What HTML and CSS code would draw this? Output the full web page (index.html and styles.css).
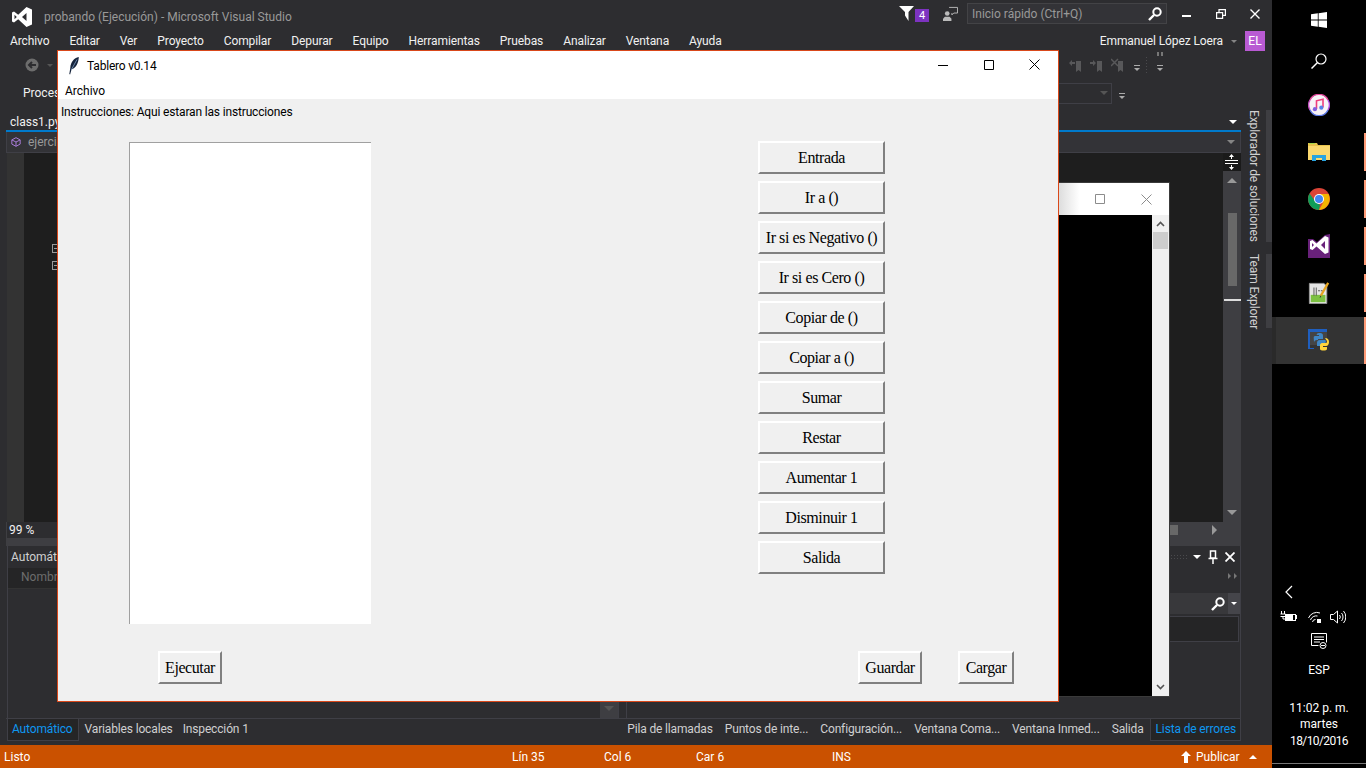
FILE: index.html
```html
<!DOCTYPE html>
<html lang="es">
<head>
<meta charset="utf-8">
<title>Tablero v0.14</title>
<link rel="stylesheet" href="styles.css">
</head>
<body>
<div class="desktop">
  <div class="vs">
    <header class="vs-title">
      <svg class="vs-logo" viewBox="0 0 20 20"><path fill="#fff" fill-rule="evenodd" d="M14.5 0 20 2.500v15L14.500 20 6.200 12.200 2 15.600 0 14.600V5.400l2-1 4.200 3.400zM14.500 6 10 10l4.500 4zM2.500 7.800v4.400L4.800 10z"/></svg>
      <span class="vs-name">probando (Ejecución) - Microsoft Visual Studio</span>
      <span class="spring"></span>
      <svg class="filter" viewBox="0 0 15 15"><path fill="#fff" d="M0 0h15L9.500 6v9L6 9.500V6z"/></svg>
      <span class="badge">4</span>
      <svg class="feedback" viewBox="0 0 16 16"><path fill="none" stroke="#bbb" d="M6.500 1.500h9v6h-4l-2 2v-2"/><circle cx="4.500" cy="8" r="2.500" fill="#bbb"/><path fill="#bbb" d="M0 16v-2.500l2-2h5l2 2V16z"/></svg>
      <div class="quick">
        <span>Inicio rápido (Ctrl+Q)</span>
        <svg class="keyicon" viewBox="0 0 14 14"><circle cx="9" cy="5" r="3.700" fill="none" stroke="#fff" stroke-width="2"/><path stroke="#fff" stroke-width="2.400" d="M6 8 1 13"/></svg>
      </div>
      <svg class="cap cap-min" viewBox="0 0 10 10"><path fill="#fff" d="M0 6h9v2H0z"/></svg>
      <svg class="cap cap-res" viewBox="0 0 10 10"><path fill="none" stroke="#fff" stroke-width="1.200" d="M.6 3.600h6v5.800h-6zM3 3.500V.6h6.400v5.800H7"/></svg>
      <svg class="cap cap-cls" viewBox="0 0 10 10"><path stroke="#fff" stroke-width="1.400" d="m.5.500 9 9m0-9-9 9"/></svg>
    </header>
    <nav class="vs-menu">
      <span>Archivo</span><span>Editar</span><span>Ver</span><span>Proyecto</span><span>Compilar</span><span>Depurar</span><span>Equipo</span><span>Herramientas</span><span>Pruebas</span><span>Analizar</span><span>Ventana</span><span>Ayuda</span>
      <span class="spring"></span>
      <span class="user">Emmanuel López Loera</span>
      <i class="caret caret-dim"></i>
      <span class="avatar">EL</span>
    </nav>
    <div class="toolbar tb1">
      <i class="grip"></i>
      <svg class="backbtn" viewBox="0 0 14 14"><circle cx="7" cy="7" r="6.500" fill="#6d6d6d"/><path stroke="#2d2d30" stroke-width="2" fill="none" d="M11 7H4m3-3L4 7l3 3"/></svg>
      <i class="caret caret-small"></i>
      <span class="spring"></span>
      <svg class="bm" viewBox="0 0 14 14"><path fill="#58585a" d="M7 3h5v11l-2.500-2L7 14zM0 5l3-3v2h3v2H3v2z"/></svg>
      <svg class="bm" viewBox="0 0 14 14"><path fill="#58585a" d="M7 3h5v11l-2.500-2L7 14zM6 5 3 2v2H0v2h3v2z"/></svg>
      <svg class="bm" viewBox="0 0 14 14"><path fill="#58585a" d="M7 3h5v11l-2.500-2L7 14z"/><path stroke="#58585a" stroke-width="1.500" d="m0 1 7 7m0-7-7 7"/></svg>
      <i class="more more1"></i>
      <i class="dotgrip"></i>
      <i class="more more3"></i>
    </div>
    <div class="toolbar tb2">
      <i class="grip grip-short"></i>
      <span class="proc">Proces</span>
      <span class="spring"></span>
      <span class="combo"><i class="caret caret-dark"></i></span>
      <i class="more more2"></i>
    </div>
    <div class="workspace">
      <div class="docs">
        <div class="tabstrip">
          <span class="doctab">class1.py</span>
          <i class="caret caret-white"></i>
        </div>
        <div class="navbar">
          <svg class="cube" viewBox="0 0 12 12"><path fill="none" stroke="#a77bd6" stroke-width="1.200" d="M6 .8 11 3.500v5L6 11.200 1 8.500v-5zM1 3.500 6 6l5-2.500M6 6v5"/></svg>
          <span>ejercicio</span>
          <span class="spring"></span>
          <i class="caret caret-dim"></i>
        </div>
        <div class="editor">
          <div class="gutter"></div>
          <div class="code">
            <i class="fold"></i>
            <i class="fold"></i>
          </div>
          <div class="vscroll">
            <svg class="split" viewBox="0 0 18 18"><path stroke="#fff" fill="none" d="M2 7.500h13M2 10.500h13"/><path fill="#fff" d="M8.500 1 6 4h2v2h1V4h2zM8.500 17 6 14h2v-2h1v2h2z"/></svg>
            <i class="arrow-up"></i>
            <i class="thumb"></i>
            <i class="marker"></i>
            <span class="spring"></span>
            <i class="arrow-down"></i>
          </div>
        </div>
        <div class="zoomrow">
          <span class="zoomval">99 %</span>
          <span class="spring"></span>
          <i class="hthumb"></i>
          <i class="arrow-right"></i>
        </div>
        <div class="panels">
          <section class="panel panel-left">
            <div class="panelhead">Automático</div>
            <div class="gridhead">Nombre</div>
            <div class="panelbody">
              <span class="spring"></span>
              <div class="panelscroll"><i class="arrow-down"></i></div>
            </div>
          </section>
          <section class="panel panel-right">
            <div class="panelhead right-head">
              <i class="dotgrip dotgrip-h"></i>
              <i class="caret caret-white"></i>
              <svg class="pin" viewBox="0 0 10 14"><path fill="none" stroke="#fff" stroke-width="1.500" d="M2.500 1h5v7h-5zM.5 8.500h9M5 9v5"/></svg>
              <svg class="panelx" viewBox="0 0 10 10"><path stroke="#fff" stroke-width="1.800" d="m.5.500 9 9m0-9-9 9"/></svg>
            </div>
            <div class="overflow"><i></i><i></i></div>
            <div class="searchrow">
              <svg class="keyicon" viewBox="0 0 14 14"><circle cx="9" cy="5" r="3.700" fill="none" stroke="#fff" stroke-width="2"/><path stroke="#fff" stroke-width="2.400" d="M6 8 1 13"/></svg>
              <span class="searchdrop"><i class="caret caret-white"></i></span>
            </div>
            <div class="listbox"></div>
            <div class="rightfill"></div>
          </section>
        </div>
        <div class="bottomtabs">
          <div class="tabgroup tabgroup-left">
            <span class="btab active">Automático</span>
            <span class="btab">Variables locales</span>
            <span class="btab">Inspección 1</span>
          </div>
          <div class="tabgroup tabgroup-right">
            <span class="btab">Pila de llamadas</span>
            <span class="btab">Puntos de inte...</span>
            <span class="btab">Configuración...</span>
            <span class="btab">Ventana Coma...</span>
            <span class="btab">Ventana Inmed...</span>
            <span class="btab">Salida</span>
            <span class="btab active">Lista de errores</span>
          </div>
        </div>
      </div>
      <aside class="sidetabs">
        <div class="sidetab st1"><span>Explorador de soluciones</span><i></i></div>
        <div class="sidetab st2"><span>Team Explorer</span><i></i></div>
      </aside>
    </div>
    <footer class="status">
      <span class="st-listo">Listo</span>
      <span class="st-lin">Lín 35</span>
      <span class="st-col">Col 6</span>
      <span class="st-car">Car 6</span>
      <span class="st-ins">INS</span>
      <svg class="st-up" viewBox="0 0 10 12"><path fill="#fff" d="M5 0 10 5H7v7H3V5H0z"/></svg>
      <span class="st-pub">Publicar</span>
      <i class="caret-up"></i>
    </footer>
  </div>

  <aside class="taskbar">
    <div class="slot slot-top">
      <svg class="win" viewBox="0 0 16 16"><path fill="#fff" d="M0 2.300 6.800 1.300v6.300H0zM7.600 1.200 16 0v7.600H7.600zM0 8.400h6.800v6.300L0 13.700zM7.600 8.400H16V16l-8.400-1.200z"/></svg>
    </div>
    <div class="slot slot-top">
      <svg class="find" viewBox="0 0 16 16"><circle cx="10" cy="6" r="5" fill="none" stroke="#fff" stroke-width="1.200"/><path stroke="#fff" stroke-width="1.500" d="M6.500 9.500 .5 15.500"/></svg>
    </div>
    <div class="slot">
      <svg class="app" viewBox="0 0 22 22"><circle cx="11" cy="11" r="10.500" fill="#f7f3f8"/><path fill="none" stroke="#e0469a" stroke-width="1.400" d="M2 6A10 10 0 0 1 20 6"/><path fill="none" stroke="#5b78e6" stroke-width="1.400" d="M20 16A10 10 0 0 1 2 16"/><path fill="none" stroke="#c44fc0" stroke-width="1.400" d="M2 6a10 10 0 0 0 0 10"/><path fill="none" stroke="#b04fe0" stroke-width="1.400" d="M20 6a10 10 0 0 1 0 10"/><path fill="none" stroke="#ee3d7d" stroke-width="1.600" d="M8.500 15V6.800l6.500-1.500v8.200"/><circle cx="6.900" cy="15.200" r="2.100" fill="#7f5fe0"/><circle cx="13.300" cy="13.700" r="2.100" fill="#5a7fe8"/></svg>
    </div>
    <div class="slot run">
      <svg class="app" viewBox="0 0 22 20"><path fill="#e8c44d" d="M0 1h9l1 2h12v3H0z"/><path fill="#a6d84a" d="M1 1h6v1H1z"/><path fill="#fbd96f" d="M0 4h22v14H0z"/><path fill="#2aa5e0" d="M4 19v-6h14v6h-4v-3H8v3z"/></svg>
    </div>
    <div class="slot run">
      <svg class="app" viewBox="0 0 22 22"><circle cx="11" cy="11" r="11" fill="#db4437"/><path fill="#0f9d58" d="M11 22A11 11 0 0 1 1.500 5.500L7 13l5 4z"/><path fill="#f4b400" d="M11 6h9.500A11 11 0 0 1 11 22l4.500-8z"/><circle cx="11" cy="11" r="5" fill="#fff"/><circle cx="11" cy="11" r="4" fill="#4285f4"/></svg>
    </div>
    <div class="slot run">
      <svg class="app app-tall" viewBox="0 0 22 24"><path fill="#68217a" d="M0 5h5l4 3 8-7 5-1v24H0z"/><path fill="#fff" fill-rule="evenodd" d="M17 2l3.500 1.500v15L17 20l-8.500-7.500L4.500 16 2 15V7l2.500-1 4 3.500zM17 7l-4 4 4 4zM4 9v4l2-2z"/></svg>
    </div>
    <div class="slot run">
      <svg class="app" viewBox="0 0 22 24"><path fill="#e6e6e6" stroke="#999" d="M.5 1.500h16l3 3v19H.5z"/><path fill="#7cc142" d="M2 14h16v8H2z"/><path fill="#555" d="M5 6h1v9H5zM7.500 6h1v9h-1zM10 9h2v1h-2zM13 9h2v1h-2z"/><path stroke="#e6a520" stroke-width="2.500" d="M21 1 13 15"/><path stroke="#333" stroke-width="1" d="m13 15-.8 2"/></svg>
    </div>
    <div class="slot run active">
      <svg class="app" viewBox="0 0 22 22"><path fill="#1f5fbf" d="M0 0h19v3H2v16h4v1H0z"/><path fill="#444" d="M2 3h17v13H2z"/><path fill="#3f86c4" d="M11 4c4 0 4 1.500 4 3v3h-5v1h7c2 0 0 6-2 6H9v-3c0-2 1-3 3-3h-3c-2 0-3 1-3 3v-1c0-3-1-6 1-6h4V6H9c-1 0 0-2 2-2z"/><path fill="#ffd43b" d="M17 9c3 0 4 2 4 4s-1 4-3 4h-3v1h4v2c0 2-7 2-7 0v-4c0-1 1-2 2-2h4c1 0 1-1 1-2z"/></svg>
    </div>
    <span class="spring"></span>
    <div class="tray">
      <svg class="chev" viewBox="0 0 8 14"><path fill="none" stroke="#fff" stroke-width="1.200" d="M7 1 1 7l6 6"/></svg>
      <div class="tray-icons">
        <svg class="t-batt" viewBox="0 0 17 12"><path fill="none" stroke="#fff" d="M1.500 0v3M4.500 0v3M.5 3h5v2.500h-5M3 6v2h2"/><path fill="#fff" d="M5 3h11v1h1v4h-1v2H5zM6 4v5h9V4z"/><path fill="#fff" d="M6 4h7v5H6z"/></svg>
        <svg class="t-wifi" viewBox="0 0 13 12"><path fill="none" stroke="#fff" d="M.5 7A9 9 0 0 1 12 2M2.500 9A6 6 0 0 1 9.500 5M4.500 11a3 3 0 0 1 3-2.500"/><path fill="#fff" d="M9 8h4v4H9z"/></svg>
        <svg class="t-vol" viewBox="0 0 16 14"><path fill="none" stroke="#fff" d="M.5 4.500h3l4-3.500v12l-4-3.500h-3zM9.500 5a3 3 0 0 1 0 4M11.500 3a6 6 0 0 1 0 8M13.500 1a9 9 0 0 1 0 12"/></svg>
      </div>
      <svg class="t-note" viewBox="0 0 16 16"><path fill="none" stroke="#fff" d="M.5.500h15v9M.5.500v12h7"/><path stroke="#fff" d="M3 4h10M3 6.500h10M3 9h6"/><circle cx="12" cy="12.500" r="3" fill="#000" stroke="#fff"/><path stroke="#fff" d="M10 12.500h4"/></svg>
      <div class="lang">ESP</div>
      <div class="clock">11:02 p. m.<br>martes<br><span class="date">18/10/2016</span></div>
    </div>
    <div class="bottomline"></div>
  </aside>

  <div class="console">
    <div class="con-title">
      <span class="con-fade"></span>
      <svg class="con-max" viewBox="0 0 10 10"><path fill="none" stroke="#8c8c8c" d="M.5.500h9v9h-9z"/></svg>
      <svg class="con-cls" viewBox="0 0 11 11"><path stroke="#8c8c8c" d="m.5.500 10 10m0-10-10 10"/></svg>
    </div>
    <div class="con-body">
      <div class="con-screen"></div>
      <div class="con-scroll">
        <svg class="con-arrow" viewBox="0 0 9 6"><path fill="none" stroke="#555" stroke-width="1.600" d="m1 5 3.500-3.500L8 5"/></svg>
        <i class="con-thumb"></i>
        <span class="spring"></span>
        <svg class="con-arrow" viewBox="0 0 9 6"><path fill="none" stroke="#555" stroke-width="1.600" d="M1 1l3.500 3.500L8 1"/></svg>
      </div>
    </div>
  </div>

  <div class="tk">
    <div class="tk-title">
      <svg class="feather" viewBox="0 0 10 18"><path fill="#16243c" d="M9.800 0C5 1 1.500 5 1.300 11L.3 17l.8.500 1.400-5C7 11 9.500 6 9.800 0z"/><path stroke="#8fb0d8" stroke-width=".7" d="M8 2.500 2.200 13"/></svg>
      <span class="tk-name">Tablero v0.14</span>
      <span class="spring"></span>
      <svg class="tk-cap tk-min" viewBox="0 0 10 10"><path stroke="#000" d="M0 5.500h10"/></svg>
      <svg class="tk-cap tk-max" viewBox="0 0 10 10"><path fill="none" stroke="#000" d="M.5.500h9v9h-9z"/></svg>
      <svg class="tk-cap tk-cls" viewBox="0 0 11 11"><path stroke="#000" d="m.5.500 10 10m0-10-10 10"/></svg>
    </div>
    <div class="tk-menu"><span>Archivo</span></div>
    <div class="tk-body">
      <div class="tk-label">Instrucciones: Aqui estaran las instrucciones</div>
      <div class="tk-main">
        <div class="tk-text"></div>
        <div class="tk-buttons">
          <button class="tkbtn wide">Entrada</button>
          <button class="tkbtn wide">Ir a ()</button>
          <button class="tkbtn wide">Ir si es Negativo ()</button>
          <button class="tkbtn wide">Ir si es Cero ()</button>
          <button class="tkbtn wide">Copiar de ()</button>
          <button class="tkbtn wide">Copiar a ()</button>
          <button class="tkbtn wide">Sumar</button>
          <button class="tkbtn wide">Restar</button>
          <button class="tkbtn wide">Aumentar 1</button>
          <button class="tkbtn wide">Disminuir 1</button>
          <button class="tkbtn wide">Salida</button>
        </div>
      </div>
      <div class="tk-actions">
        <button class="tkbtn b-ejec">Ejecutar</button>
        <span class="spring"></span>
        <button class="tkbtn b-guar">Guardar</button>
        <button class="tkbtn b-carg">Cargar</button>
      </div>
    </div>
  </div>
</div>
</body>
</html>
```
FILE: styles.css
```css
* { box-sizing: border-box; }
html, body { margin: 0; height: 100%; overflow: hidden; }
body { background: #000; font-family: Roboto, "Noto Sans", sans-serif; font-size: 12px; color: #f1f1f1; }
i { display: block; }
svg { display: block; flex: none; }
.spring { flex: 1 1 auto; }

.desktop { position: relative; width: 1366px; height: 768px; display: flex; overflow: hidden; }

/* Visual Studio */
.vs { width: 1272px; height: 768px; display: flex; flex-direction: column; background: #2d2d30; flex: none; }
.vs-title { height: 32px; display: flex; align-items: center; padding-left: 12px; flex: none; }
.vs-logo { width: 20px; height: 20px; margin-top: 1px; }
.vs-name { margin-left: 12px; color: #999; margin-top: 2px; }
.filter { width: 15px; height: 15px; margin-top: -6px; }
.badge { width: 14px; height: 13px; background: #7d33c0; color: #fff; font-size: 11px; line-height: 13px; text-align: center; margin: -1px 0 0 1px; }
.feedback { width: 15px; height: 15px; margin: -6px 0 0 14px; }
.quick { width: 200px; height: 21px; border: 1px solid #434346; background: #333337; color: #999; margin: -5px 0 0 9px; display: flex; align-items: center; justify-content: space-between; padding: 0 4px; }
.keyicon { width: 14px; height: 14px; }
.cap { width: 10px; height: 10px; margin-top: -4px; }
.cap-min { margin-left: 15px; }
.cap-res { margin-left: 24px; }
.cap-cls { margin-left: 24px; margin-right: 12px; }

.vs-menu { height: 18px; display: flex; align-items: center; gap: 20px; padding: 0 7px 0 10px; flex: none; letter-spacing: -.1px; }
.vs-menu .caret { border-left-width: 3px; border-right-width: 3px; border-top-width: 3px; }
.user { color: #f1f1f1; margin-right: -12px; }
.avatar { width: 20px; height: 20px; background: #b95ad3; color: #fff; line-height: 20px; text-align: center; margin-left: -12px; letter-spacing: 0; }
.caret { width: 0; height: 0; border-left: 4px solid transparent; border-right: 4px solid transparent; border-top: 4px solid #999; flex: none; }
.caret-dim { border-top-color: #858585; }
.caret-small { border-left-width: 3px; border-right-width: 3px; border-top: 3px solid #555; margin-left: 8px; }
.caret-dark { border-top-color: #555; }
.caret-white { border-top-color: #fff; }

.toolbar { display: flex; align-items: center; flex: none; }
.tb1 { height: 28px; padding: 2px 109px 0 13px; }
.tb2 { height: 28px; padding: 2px 147px 0 13px; }
.grip { width: 4px; height: 18px; background-image: radial-gradient(#4a4a4d 40%, transparent 45%); background-size: 2px 2px; }
.grip-short { height: 16px; }
.backbtn { width: 14px; height: 14px; margin-left: 8px; }
.bm { width: 14px; height: 14px; margin-left: 7px; }
.more { width: 6px; height: 7px; margin-left: 4px; margin-top: 7px; border-top: 1px solid #aaa; position: relative; }
.more::after { content: ""; display: block; margin-top: 2px; width: 0; height: 0; border-left: 3px solid transparent; border-right: 3px solid transparent; border-top: 3px solid #aaa; }
.more1 { margin-left: 9px; }
.more2 { margin-left: 7px; }
.more3 { margin-left: 8px; }
.more3::before { content: ""; position: absolute; left: 0; top: -14px; width: 6px; height: 4px; background: linear-gradient(90deg, #777 2px, transparent 2px, transparent 4px, #777 4px); }
.dotgrip { width: 4px; height: 18px; margin-left: 5px; background-image: radial-gradient(#4a4a4d 40%, transparent 45%); background-size: 3px 3px; }
.proc { margin-left: 6px; color: #f1f1f1; }
.combo { width: 60px; height: 21px; border: 1px solid #3f3f46; display: flex; align-items: center; justify-content: flex-end; padding-right: 3px; }

.workspace { flex: 1 1 auto; display: flex; min-height: 0; }
.docs { width: 1241px; padding-left: 6px; display: flex; flex-direction: column; flex: none; }
.tabstrip { display: flex; align-items: center; justify-content: space-between; border-bottom: 2px solid #007acc; height: 26px; flex: none; padding: 7px 4px 0 0; }
.doctab { margin: 0 0 0 4px; color: #f1f1f1; }
.tabstrip .caret-white { border-left-width: 4px; border-right-width: 4px; }
.navbar { height: 21px; background: #333337; border: 1px solid #3f3f46; border-top: 0; display: flex; align-items: center; padding: 0 5px 0 4px; gap: 7px; color: #999; flex: none; }
.cube { width: 10px; height: 10px; }
.editor { height: 369px; display: flex; flex: none; padding-left: 1px; }
.gutter { width: 17px; background: #333; }
.code { flex: 1 1 auto; background: #1e1e1e; padding: 91px 0 0 28px; display: flex; flex-direction: column; gap: 8px; }
.fold { width: 9px; height: 9px; border: 1px solid #999; position: relative; }
.fold::after { content: ""; position: absolute; left: 1px; top: 3px; width: 5px; height: 1px; background: #999; }
.vscroll { width: 18px; background: #3e3e42; display: flex; flex-direction: column; align-items: center; }
.split { width: 18px; height: 18px; background: #1a1a1a; }
.arrow-up { width: 0; height: 0; border-left: 5px solid transparent; border-right: 5px solid transparent; border-bottom: 5px solid #999; margin-top: 7px; }
.thumb { width: 9px; height: 73px; background: #686868; margin-top: 30px; }
.marker { width: 17px; height: 2px; background: #ddd; margin-top: 13px; }
.arrow-down { width: 0; height: 0; border-left: 5px solid transparent; border-right: 5px solid transparent; border-top: 5px solid #999; margin-bottom: 7px; }
.zoomrow { height: 16px; display: flex; align-items: center; background: #3e3e42; flex: none; padding-right: 24px; }
.zoomval { width: 50px; padding-left: 2px; background: #2d2d30; height: 16px; line-height: 16px; color: #f1f1f1; margin-left: 1px; }
.hthumb { width: 30px; height: 10px; background: #686868; margin-right: 34px; }
.arrow-right { width: 0; height: 0; border-top: 5px solid transparent; border-bottom: 5px solid transparent; border-left: 5px solid #999; }

.panels { flex: 1 1 auto; display: flex; min-height: 0; border-top: 8px solid #3e3e42; gap: 7px; }
.panel { display: flex; flex-direction: column; min-width: 0; border-left: 1px solid #3f3f46; border-right: 1px solid #3f3f46; }
.panel-left { width: 612px; margin-left: 1px; }
.panel-right { flex: 1 1 auto; }
.panelhead { height: 22px; line-height: 20px; padding-left: 3px; color: #d0d0d0; flex: none; background: #2d2d30; display: flex; align-items: center; }
.gridhead { height: 21px; line-height: 19px; padding-left: 13px; color: #6d6d6d; background: #252526; border-bottom: 1px solid #333; flex: none; }
.panelbody { flex: 1 1 auto; display: flex; background: #2d2d30; }
.panelscroll { width: 18px; background: #3e3e42; display: flex; flex-direction: column; align-items: center; justify-content: flex-end; }
.panelscroll .arrow-down { border-top-color: #555; }
.right-head { justify-content: flex-end; padding-right: 5px; }
.dotgrip-h { width: 28px; height: 6px; margin: 0 4px 0 0; background-size: 3px 3px; }
.pin { width: 10px; height: 14px; margin-left: 7px; }
.panelx { width: 10px; height: 10px; margin-left: 7px; }
.overflow { height: 25px; display: flex; justify-content: flex-end; gap: 3px; padding: 5px 3px 0 0; flex: none; }
.overflow i { width: 0; height: 0; border-top: 3px solid transparent; border-bottom: 3px solid transparent; border-left: 3px solid #777; }
.searchrow { height: 21px; background: #38383b; display: flex; align-items: center; justify-content: flex-end; flex: none; }
.searchdrop { width: 12px; height: 21px; background: #45454a; display: flex; align-items: center; justify-content: center; margin-left: 3px; }
.searchdrop .caret { border-left-width: 3px; border-right-width: 3px; border-top-width: 3px; }
.listbox { height: 26px; background: #252526; border: 1px solid #3f3f46; flex: none; margin: 2px 1px 0 0; }
.rightfill { flex: 1 1 auto; background: #2d2d30; }

.bottomtabs { height: 22px; display: flex; gap: 7px; flex: none; border-top: 1px solid #3f3f46; margin-bottom: 5px; }
.tabgroup { display: flex; height: 22px; align-items: center; color: #d0d0d0; letter-spacing: -.15px; }
.tabgroup-left { width: 612px; margin-left: 1px; }
.tabgroup-right { flex: 1 1 auto; justify-content: flex-end; }
.btab { padding: 0 5px; height: 22px; line-height: 20px; white-space: nowrap; }
.tabgroup-right .btab { padding: 0 6px; }
.btab.active { color: #0e97f0; background: #252526; border: 1px solid #3f3f46; border-top: 0; }
.tabgroup-left .active { padding: 0 5px 0 4px; margin-right: 1px; }
.tabgroup-right .active { padding: 0 4px 0 5px; }

.sidetabs { flex: 1 1 auto; display: flex; flex-direction: column; padding-top: 4px; gap: 12px; }
.sidetab { display: flex; justify-content: flex-end; position: relative; }
.sidetab span { writing-mode: vertical-rl; color: #d0d0d0; margin-right: 5px; white-space: nowrap; letter-spacing: -.1px; }
.sidetab i { width: 6px; background: #3e3e42; }
.st1 { height: 132px; }
.st2 { height: 74px; }

.status { height: 23px; flex: none; background: #ca5100; display: flex; align-items: center; color: #fff; }
.st-listo { margin-left: 4px; width: 508px; }
.st-lin { width: 92px; }
.st-col { width: 92px; }
.st-car { width: 136px; }
.st-ins { width: 349px; }
.st-up { width: 10px; height: 12px; }
.st-pub { margin-left: 5px; width: 53px; }
.caret-up { width: 0; height: 0; border-left: 4px solid transparent; border-right: 4px solid transparent; border-bottom: 4px solid #fff; }

/* Taskbar */
.taskbar { width: 94px; height: 768px; background: #000; display: flex; flex-direction: column; flex: none; }
.slot { height: 47px; display: flex; align-items: center; justify-content: center; position: relative; flex: none; padding: 0 1px 1px 0; }
.slot-top { height: 41px; }
.win { width: 16px; height: 16px; }
.find { width: 16px; height: 16px; }
.app { width: 22px; height: 22px; }
.app-tall { height: 24px; }
.run::after { content: ""; position: absolute; right: 0; top: 4px; bottom: 5px; width: 2px; background: #ff9b77; }
.active { background: #333; border-left: 4px solid #2a2a2a; }
.run.active { padding-right: 5px; }
.run.active::after { top: 0; bottom: 0; }
.tray { display: flex; flex-direction: column; align-items: center; color: #fff; }
.chev { width: 8px; height: 14px; margin: 0 60px 0 0; }
.tray-icons { display: flex; align-items: center; margin: 11px 0 0 0; gap: 9px; padding-right: 13px; }
.t-batt { width: 17px; height: 12px; }
.t-wifi { width: 13px; height: 12px; margin-left: 2px; }
.t-vol { width: 16px; height: 14px; }
.t-note { width: 16px; height: 16px; margin-top: 9px; }
.lang { margin-top: 13px; line-height: 16px; }
.clock { margin-top: 22px; text-align: center; line-height: 16.500px; }
.date { letter-spacing: -.6px; }
.bottomline { height: 1px; background: #777; margin-top: 14px; margin-bottom: 4px; flex: none; }

/* Console */
.console { position: absolute; left: 1000px; top: 183px; width: 169px; height: 513px; background: #f0f0f0; box-shadow: 0 0 0 1px #3a3a3a; display: flex; flex-direction: column; }
.con-title { height: 32px; background: #fff; display: flex; align-items: center; flex: none; }
.con-fade { width: 82px; height: 32px; margin-left: 59px; background: linear-gradient(90deg, #ddd, #fff 25%); }
.con-max { width: 10px; height: 10px; margin-left: -46px; }
.con-cls { width: 11px; height: 11px; margin-left: 36px; }
.con-body { flex: 1 1 auto; display: flex; min-height: 0; }
.con-screen { flex: 1 1 auto; background: #000; }
.con-scroll { width: 17px; background: #f0f0f0; display: flex; flex-direction: column; align-items: center; flex: none; }
.con-arrow { width: 9px; height: 6px; margin: 6px 0; }
.con-thumb { width: 15px; height: 17px; background: #cdcdcd; margin-top: -1px; }

/* Tk window */
.tk { position: absolute; left: 57px; top: 50px; width: 1002px; height: 652px; border: 1px solid #d9481a; background: #f0f0f0; display: flex; flex-direction: column; color: #000; }
.tk-title { height: 27px; background: #fff; display: flex; align-items: center; padding: 2px 0 0 11px; flex: none; }
.feather { width: 10px; height: 18px; }
.tk-name { margin-left: 8px; letter-spacing: -.2px; }
.tk-cap { width: 10px; height: 10px; margin-top: -2px; }
.tk-max { margin-left: 36px; }
.tk-cls { width: 11px; height: 11px; margin-left: 35px; margin-right: 18px; }
.tk-menu { height: 21px; background: #fff; padding: 4px 0 0 7px; flex: none; line-height: 18px; }
.tk-body { flex: 1 1 auto; display: flex; flex-direction: column; min-height: 0; }
.tk-label { padding: 4px 0 0 3px; line-height: 18px; height: 43px; flex: none; letter-spacing: -.16px; }
.tk-main { display: flex; flex: none; padding-left: 71px; }
.tk-text { width: 242px; height: 482px; background: #fff; border-top: 1px solid #a0a0a0; border-left: 1px solid #a0a0a0; flex: none; }
.tk-buttons { display: flex; flex-direction: column; gap: 7px; margin-left: 387px; margin-top: -1px; }
.tkbtn { font-family: "Liberation Serif", serif; font-size: 16px; letter-spacing: -.42px; color: #000; background: #f0f0f0; height: 33px; padding: 0; border: 0; border-top: 2px solid #fff; border-left: 2px solid #fff; border-right: 2px solid #808080; border-bottom: 2px solid #808080; display: block; white-space: nowrap; text-align: center; }
.wide { width: 127px; }
.tk-actions { display: flex; padding: 27px 44px 0 100px; flex: none; }
.b-ejec { width: 64px; }
.b-guar { width: 64px; }
.b-carg { width: 56px; margin-left: 36px; }
```
